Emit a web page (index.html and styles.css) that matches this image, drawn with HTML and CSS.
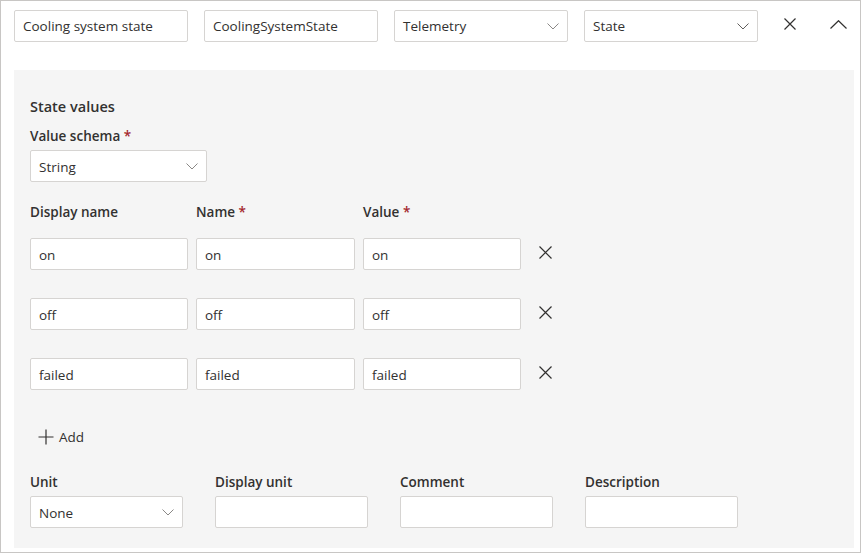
FILE: index.html
```html
<!DOCTYPE html>
<html>
<head>
<meta charset="utf-8">
<link rel="stylesheet" href="styles.css">
</head>
<body>
<div class="card">
  <div class="top-row">
    <div class="field w174"><span class="val">Cooling system state</span></div>
    <div class="field w174"><span class="val">CoolingSystemState</span></div>
    <div class="field w174 dd"><span class="val">Telemetry</span><svg class="chev" width="12" height="7" viewBox="0 0 12 7"><path d="M0.5 0.5 L6 6 L11.5 0.5" fill="none" stroke="#8a8886" stroke-width="1"/></svg></div>
    <div class="field w174 dd"><span class="val">State</span><svg class="chev" width="12" height="7" viewBox="0 0 12 7"><path d="M0.5 0.5 L6 6 L11.5 0.5" fill="none" stroke="#605e5c" stroke-width="1"/></svg></div>
    <button class="icon-btn lift"><svg width="12" height="12" viewBox="0 0 12 12"><path d="M0.5 0.5 L11.5 11.5 M11.5 0.5 L0.5 11.5" stroke="#323130" stroke-width="1.2" fill="none"/></svg></button>
    <button class="icon-btn lift"><svg width="17" height="9" viewBox="0 0 17 9"><path d="M0.5 8.5 L8.5 0.7 L16.5 8.5" stroke="#323130" stroke-width="1.2" fill="none"/></svg></button>
  </div>

  <div class="panel">
    <div class="heading">State values</div>
    <div class="label">Value schema <span class="req">*</span></div>
    <div class="field w177 dd"><span class="val">String</span><svg class="chev" width="12" height="7" viewBox="0 0 12 7"><path d="M0.5 0.5 L6 6 L11.5 0.5" fill="none" stroke="#8a8886" stroke-width="1"/></svg></div>

    <div class="grid-head">
      <div class="label">Display name</div>
      <div class="label">Name <span class="req">*</span></div>
      <div class="label">Value <span class="req">*</span></div>
    </div>

    <div class="rows">
      <div class="vrow">
        <div class="field w158"><span class="val">on</span></div>
        <div class="field w159"><span class="val">on</span></div>
        <div class="field w158"><span class="val">on</span></div>
        <button class="icon-btn lift"><svg width="13" height="13" viewBox="0 0 13 13"><path d="M0.5 0.5 L12.5 12.5 M12.5 0.5 L0.5 12.5" stroke="#323130" stroke-width="1.2" fill="none"/></svg></button>
      </div>
      <div class="vrow">
        <div class="field w158"><span class="val">off</span></div>
        <div class="field w159"><span class="val">off</span></div>
        <div class="field w158"><span class="val">off</span></div>
        <button class="icon-btn lift"><svg width="13" height="13" viewBox="0 0 13 13"><path d="M0.5 0.5 L12.5 12.5 M12.5 0.5 L0.5 12.5" stroke="#323130" stroke-width="1.2" fill="none"/></svg></button>
      </div>
      <div class="vrow">
        <div class="field w158"><span class="val">failed</span></div>
        <div class="field w159"><span class="val">failed</span></div>
        <div class="field w158"><span class="val">failed</span></div>
        <button class="icon-btn lift"><svg width="13" height="13" viewBox="0 0 13 13"><path d="M0.5 0.5 L12.5 12.5 M12.5 0.5 L0.5 12.5" stroke="#323130" stroke-width="1.2" fill="none"/></svg></button>
      </div>
    </div>

    <button class="add-btn"><svg width="16" height="16" viewBox="0 0 16 16"><path d="M8 0.5 V15.5 M0.5 8 H15.5" stroke="#323130" stroke-width="1.2" fill="none"/></svg><span>Add</span></button>

    <div class="bottom-row">
      <div class="col">
        <div class="label">Unit</div>
        <div class="field w153 dd"><span class="val">None</span><svg class="chev" width="12" height="7" viewBox="0 0 12 7"><path d="M0.5 0.5 L6 6 L11.5 0.5" fill="none" stroke="#8a8886" stroke-width="1"/></svg></div>
      </div>
      <div class="col">
        <div class="label">Display unit</div>
        <div class="field w153"></div>
      </div>
      <div class="col">
        <div class="label">Comment</div>
        <div class="field w153"></div>
      </div>
      <div class="col">
        <div class="label">Description</div>
        <div class="field w153"></div>
      </div>
    </div>
  </div>
</div>
</body>
</html>
```

FILE: styles.css
```css
* { box-sizing: border-box; }
html, body { margin: 0; padding: 0; background: #ffffff; }
body {
  font-family: "Open Sans", "Noto Sans", "Liberation Sans", sans-serif;
  font-size: 13.5px;
  color: #323130;
}
.card {
  width: 861px;
  height: 553px;
  border: 1px solid #c8c6c4;
  padding: 9px 6px 0 13px;
}
.top-row {
  display: flex;
  align-items: center;
  gap: 16px;
  height: 32px;
}
.field {
  height: 32px;
  background: #ffffff;
  border: 1px solid #d6d4d2;
  border-radius: 2px;
  display: flex;
  align-items: center;
  padding: 0 8px;
  flex: none;
}
.vrow .field, .panel > .field, .col .field { padding-top: 1px; }
.val { white-space: nowrap; }
.dd { justify-content: space-between; padding-right: 8px; }
.chev { flex: none; }
.w174 { width: 174px; }
.w177 { width: 177px; }
.w158 { width: 158px; }
.w159 { width: 159px; }
.w153 { width: 153px; }
.icon-btn {
  width: 32px;
  height: 32px;
  border: none;
  background: transparent;
  padding: 0;
  display: flex;
  align-items: center;
  justify-content: center;
  flex: none;
}
.lift { padding-bottom: 4px; }
.panel {
  margin-top: 28px;
  width: 840px;
  height: 478px;
  background: #f5f5f5;
  padding: 27px 16px 0 16px;
}
.heading {
  font-size: 14.5px;
  font-weight: 600;
  line-height: 20px;
}
.label {
  font-size: 13.5px;
  font-weight: 600;
  line-height: 20px;
}
.panel > .label { margin-top: 9px; margin-bottom: 4px; }
.req { color: #a4262c; }
.grid-head {
  display: flex;
  gap: 8px;
  margin-top: 20px;
}
.grid-head .label { width: 158px; }
.grid-head .label + .label { width: 159px; }
.rows {
  display: flex;
  flex-direction: column;
  gap: 28px;
  margin-top: 16px;
}
.vrow {
  display: flex;
  gap: 8px;
  align-items: center;
}
.add-btn {
  margin-top: 31px;
  height: 32px;
  border: none;
  background: transparent;
  padding: 0 0 0 8px;
  display: flex;
  align-items: center;
  gap: 5px;
  font-family: inherit;
  font-size: 13.5px;
  color: #323130;
}
.bottom-row {
  display: flex;
  gap: 32px;
  margin-top: 19px;
}
.col .label { margin-bottom: 4px; }
```
